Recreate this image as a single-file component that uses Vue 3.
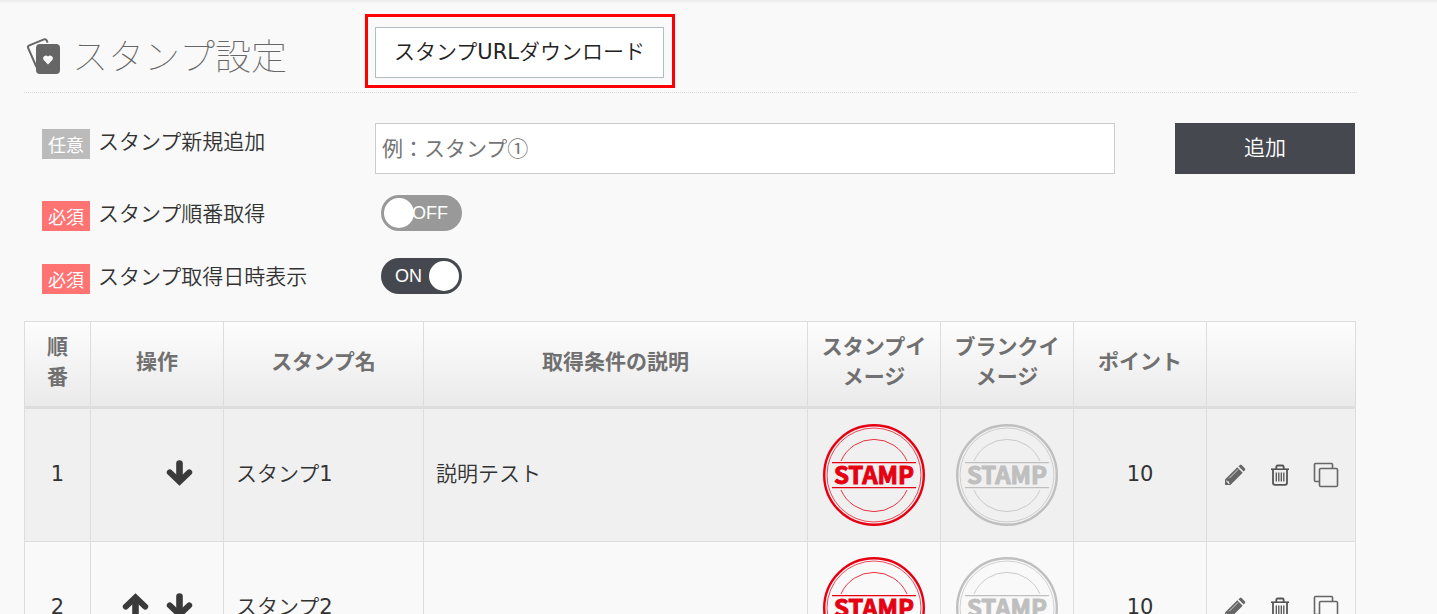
<script setup>
import { ref } from 'vue'

const newName = ref('')
const sequential = ref(false)
const showDate = ref(true)

const stamps = ref([
  { id: 1, name: 'スタンプ1', description: '説明テスト', point: 10 },
  { id: 2, name: 'スタンプ2', description: '', point: 10 },
])

const headings = ['順番', '操作', 'スタンプ名', '取得条件の説明', 'スタンプイメージ', 'ブランクイメージ', 'ポイント', '']
const variants = ['red', 'blank']
</script>

<template>
  <main class="page">
    <header class="head">
      <h1 class="title">
        <svg class="title-icon" width="36" height="38" viewBox="0 0 36 38" aria-hidden="true">
          <path d="M10.5 30 2.2 11.2Q1.4 9.2 3.3 8.4L18 2.4Q19.8 1.7 20.7 3.4L21.6 5.6" fill="none" stroke="#666" stroke-width="2" />
          <rect x="10" y="7" width="24" height="30" rx="4" fill="#666" />
          <path d="M22 27.6 17.9 23.2A2.7 2.7 0 0 1 22 19.6 2.7 2.7 0 0 1 26.1 23.2Z" fill="#fafafa" />
        </svg>
        <span>スタンプ設定</span>
      </h1>
      <div class="highlight">
        <button type="button" class="download">スタンプURLダウンロード</button>
      </div>
    </header>

    <form class="form" @submit.prevent>
      <div class="row row-add">
        <label class="label" for="stamp-name"><span class="badge">任意</span>スタンプ新規追加</label>
        <input id="stamp-name" v-model="newName" class="field" type="text" placeholder="例：スタンプ①" />
        <button type="submit" class="add">追加</button>
      </div>
      <div class="row">
        <label class="label" for="sequential"><span class="badge required">必須</span>スタンプ順番取得</label>
        <label class="switch">
          <input id="sequential" v-model="sequential" type="checkbox" />
          <span class="track" :class="{ on: sequential }"><span class="knob"></span><span class="state">{{ sequential ? 'ON' : 'OFF' }}</span></span>
        </label>
      </div>
      <div class="row">
        <label class="label" for="show-date"><span class="badge required">必須</span>スタンプ取得日時表示</label>
        <label class="switch">
          <input id="show-date" v-model="showDate" type="checkbox" />
          <span class="track" :class="{ on: showDate }"><span class="knob"></span><span class="state">{{ showDate ? 'ON' : 'OFF' }}</span></span>
        </label>
      </div>
    </form>

    <table class="table">
      <colgroup>
        <col class="c-order" /><col class="c-std" /><col class="c-name" /><col />
        <col class="c-std" /><col class="c-std" /><col class="c-std" /><col class="c-tools" />
      </colgroup>
      <thead>
        <tr>
          <th v-for="(h, i) in headings" :key="i" scope="col">{{ h }}</th>
        </tr>
      </thead>
      <tbody>
        <tr v-for="(s, i) in stamps" :key="s.id">
          <td class="center">{{ s.id }}</td>
          <td>
            <div class="moves">
              <button v-if="i > 0" type="button" class="icon" aria-label="上へ">
                <svg width="27" height="26" viewBox="0 0 27 26"><g fill="none" stroke="#3a3a3a" stroke-linecap="round"><path d="M13.5 22.5V8" stroke-width="6.6" /><path d="M3.8 13.6 13.5 4.4 23.2 13.6" stroke-width="6" /></g></svg>
              </button>
              <button type="button" class="icon" aria-label="下へ">
                <svg width="27" height="26" viewBox="0 0 27 26"><g fill="none" stroke="#3a3a3a" stroke-linecap="round"><path d="M13.5 3.5V18" stroke-width="6.6" /><path d="M3.8 12.4 13.5 21.6 23.2 12.4" stroke-width="6" /></g></svg>
              </button>
            </div>
          </td>
          <td>{{ s.name }}</td>
          <td>{{ s.description }}</td>
          <td v-for="v in variants" :key="v" class="image">
            <svg class="stamp" :class="v" width="104" height="104" viewBox="0 0 104 104">
              <g fill="none" stroke="currentColor">
                <circle cx="52" cy="52" r="49.8" stroke-width="2.4" />
                <circle cx="52" cy="52" r="47" stroke-width=".7" />
                <path d="M19 38A36 36 0 0 1 85 38M19 67A36 36 0 0 0 85 67" stroke-width=".8" />
                <path d="M10 39.6H94M10 64.6H94" stroke-width="1.1" />
              </g>
              <text x="52" y="61" text-anchor="middle" fill="currentColor">STAMP</text>
            </svg>
          </td>
          <td class="center">{{ s.point }}</td>
          <td>
            <div class="tools">
              <button type="button" class="icon" aria-label="編集">
                <svg width="22" height="22" viewBox="0 0 22 22"><path fill="#666" d="M1 21V15.6L13.3 3.3 18.7 8.7 6.4 21Z" /><path fill="#666" d="M14.4 2.2 16 .9Q16.8.3 17.6 1L21 4.4Q21.7 5.2 21 6L19.8 7.6Z" /><path d="M5.2 14.3 14.2 5.3" stroke="#ddd" stroke-width=".9" /><path d="M2.8 16.1 3.4 17.3 5 17.4 5 18.9 6 19.3 4.8 19.9 2.2 17.3Z" fill="#f0f0f0" /></svg>
              </button>
              <button type="button" class="icon" aria-label="削除">
                <svg width="20" height="22" viewBox="0 0 20 22" fill="none" stroke="#555"><path d="M1 5.2H19" stroke-width="1.6" /><path d="M6.3 5V3Q6.3 1.5 7.8 1.5H12.2Q13.7 1.5 13.7 3V5M3 5.5V18.8Q3 20.8 5 20.8H15Q17 20.8 17 18.8V5.5" stroke-width="1.8" /><path d="M6.3 8.5V17.5M8.8 8.5V17.5M11.3 8.5V17.5M13.8 8.5V17.5" stroke-width="1.3" /></svg>
              </button>
              <button type="button" class="icon" aria-label="複製">
                <svg width="26" height="26" viewBox="0 0 26 26" fill="none" stroke="#666" stroke-width="1.6"><path d="M6.5 19.5H2.5Q1.5 19.5 1.5 18.5V2.5Q1.5 1.5 2.5 1.5H18.5Q19.5 1.5 19.5 2.5V6.5" /><rect x="6.5" y="6.5" width="18" height="18" rx="1.3" /></svg>
              </button>
            </div>
          </td>
        </tr>
      </tbody>
    </table>
  </main>
</template>

<style>
html,
body {
  margin: 0;
  background: #f9f9f9;
}
html {
  overflow-x: hidden;
  scrollbar-width: none;
}
</style>

<style scoped>
.page {
  box-sizing: border-box;
  padding: 14px 80px 24px 24px;
  background: linear-gradient(#ececec, #f9f9f9 4px);
  color: #333;
  font-family: "DejaVu Sans", "Noto Sans CJK JP DemiLight", "Noto Sans CJK JP", sans-serif;
  font-size: 21px;
  font-weight: 400;
  line-height: 30px;
}
button,
input {
  font: inherit;
  border-radius: 0;
}
button {
  cursor: pointer;
}
.head {
  display: flex;
  align-items: center;
  padding-bottom: 4px;
  border-bottom: 1px dotted #ddd;
}
.title {
  display: flex;
  align-items: center;
  gap: 10px;
  box-sizing: border-box;
  width: 341px;
  margin: 0;
  padding: 10px 0 0 2px;
  color: #666;
  font-family: "Noto Sans CJK JP", sans-serif;
  font-size: 36px;
  font-weight: 100;
  line-height: 40px;
}
.title span {
  padding-bottom: 4px;
}
.highlight {
  padding: 10px 8px 7px 7px;
  border: 3px solid #f00;
}
.download {
  display: block;
  height: 51px;
  padding: 0 18px 2px;
  border: 1px solid #b0bcc0;
  background: #fff;
  color: #222;
  white-space: nowrap;
}
.form {
  padding: 30px 2px 0 18px;
}
.row {
  display: grid;
  grid-template-columns: 333px 1fr;
  align-items: start;
  margin-bottom: 25px;
}
.row-add {
  grid-template-columns: 333px 1fr 180px;
  margin-bottom: 21px;
}
.label {
  display: flex;
  gap: 8px;
  white-space: nowrap;
  line-height: 38px;
}
.badge {
  height: 30px;
  margin-top: 6px;
  padding: 0 6px;
  background: #bbb;
  color: #fff;
  font-family: "Noto Sans CJK JP", sans-serif;
  font-size: 18px;
  line-height: 30px;
}
.badge.required {
  background: #ff7373;
}
.field {
  box-sizing: border-box;
  min-width: 0;
  height: 51px;
  margin-right: 60px;
  padding: 0 6px 4px;
  border: 1px solid #ccc;
  background: #fff;
  color: #333;
  font-family: "Noto Sans CJK JP", sans-serif;
}
.field::placeholder {
  color: #757575;
}
.add {
  height: 51px;
  padding: 0 0 2px;
  border: 0;
  background: #464850;
  color: #fff;
}
.switch {
  position: relative;
  width: 81px;
  height: 36px;
  margin-left: 6px;
}
.switch input {
  position: absolute;
  inset: 0;
  margin: 0;
  opacity: 0;
}
.track {
  display: flex;
  align-items: center;
  box-sizing: border-box;
  height: 36px;
  padding: 0 3px;
  border-radius: 18px;
  background: #999;
  color: #fff;
  font-family: "Liberation Sans", sans-serif;
  font-size: 18px;
  line-height: 36px;
}
.knob {
  flex: none;
  width: 30px;
  height: 30px;
  border-radius: 50%;
  background: #fff;
}
.state {
  margin-left: -2px;
}
.track.on {
  flex-direction: row-reverse;
  background: #464850;
}
.track.on .state {
  margin: 0 7px 0 0;
}
.table {
  width: calc(100% - 1px);
  border-spacing: 0;
  border-top: 1px solid #ddd;
  border-right: 1px solid #ddd;
  table-layout: fixed;
}
.c-order {
  width: 66px;
}
.c-std {
  width: 133px;
}
.c-name {
  width: 200px;
}
.c-tools {
  width: 149px;
}
th,
td {
  border-left: 1px solid #ddd;
  border-bottom: 1px solid #ddd;
}
th {
  padding: 8px 12px 16px;
  border-bottom-width: 3px;
  background: linear-gradient(#fdfdfd, #eaeaea);
  color: #707070;
  font-family: "Noto Sans CJK JP", sans-serif;
  font-weight: 700;
}
td {
  height: 130px;
  padding: 0 12px 2px;
}
tbody tr:nth-child(odd) {
  background: #f0f0f0;
}
.center {
  text-align: center;
}
.moves,
.tools {
  display: flex;
  align-items: center;
}
.moves {
  justify-content: flex-end;
  gap: 17px;
  padding: 0 18px 2px 0;
}
.tools {
  justify-content: space-between;
  padding: 2px 4px 0 5px;
}
.icon {
  display: block;
  padding: 0;
  border: 0;
  background: none;
}
.icon svg,
.stamp,
.title-icon {
  display: block;
  flex: none;
}
.image {
  height: 132px;
  padding: 0;
}
.stamp {
  margin: 0 auto;
}
.stamp text {
  font-family: "Noto Sans CJK JP", sans-serif;
  font-size: 24px;
  font-weight: 700;
  stroke: currentColor;
  stroke-width: 1px;
}
.red {
  color: #e60012;
}
.blank {
  color: #bfbfbf;
}
</style>
